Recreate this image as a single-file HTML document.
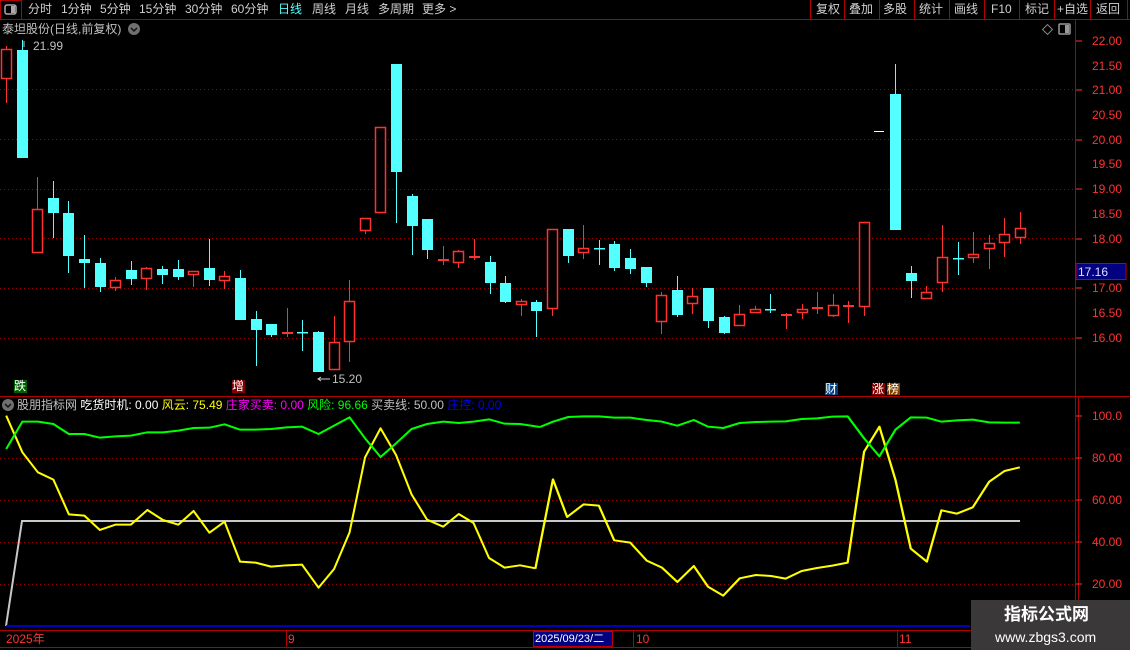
<!DOCTYPE html>
<html><head><meta charset="utf-8"><style>
body{margin:0;background:#000;width:1130px;height:650px;overflow:hidden;position:relative;font-family:"Liberation Sans","Noto Sans CJK SC",sans-serif;font-size:12px;}
.t{position:absolute;white-space:nowrap;line-height:14px;}
</style></head><body>
<svg id="s" width="1130" height="650" style="position:absolute;left:0;top:0" xmlns="http://www.w3.org/2000/svg">
<!-- toolbar -->
<line x1="0" y1="19.5" x2="1130" y2="19.5" stroke="#b00000"/>
<rect x="0.5" y="0.5" width="21" height="19" fill="none" stroke="#b00000"/>
<rect x="5" y="5" width="11" height="9" rx="2" fill="none" stroke="#aaa" stroke-width="1.5"/><rect x="11" y="6" width="4" height="7" fill="#aaa"/>
<g stroke="#b00000"><line x1="810.5" y1="0" x2="810.5" y2="19"/><line x1="844.5" y1="0" x2="844.5" y2="19"/><line x1="879.5" y1="0" x2="879.5" y2="19"/><line x1="914.5" y1="0" x2="914.5" y2="19"/><line x1="949.5" y1="0" x2="949.5" y2="19"/><line x1="984.5" y1="0" x2="984.5" y2="19"/><line x1="1019.5" y1="0" x2="1019.5" y2="19"/><line x1="1054.5" y1="0" x2="1054.5" y2="19"/><line x1="1090.5" y1="0" x2="1090.5" y2="19"/><line x1="1127.5" y1="0" x2="1127.5" y2="19"/></g>
<!-- frame -->
<line x1="1075.5" y1="20" x2="1075.5" y2="630" stroke="#b00000"/>
<line x1="1078.5" y1="396" x2="1078.5" y2="630" stroke="#b00000"/>
<line x1="0" y1="396.5" x2="1130" y2="396.5" stroke="#b00000"/>
<line x1="0" y1="630.5" x2="1130" y2="630.5" stroke="#b00000"/>
<line x1="0" y1="647.5" x2="1130" y2="647.5" stroke="#b00000"/>
<g stroke="#b00000"><line x1="286.5" y1="630" x2="286.5" y2="647"/><line x1="633.5" y1="630" x2="633.5" y2="647"/><line x1="897.5" y1="630" x2="897.5" y2="647"/></g>
<!-- grid -->
<g stroke="#a00000" stroke-dasharray="1,3"><line x1="0" y1="89.5" x2="1075" y2="89.5"/><line x1="0" y1="139.5" x2="1075" y2="139.5"/><line x1="0" y1="189.5" x2="1075" y2="189.5"/><line x1="0" y1="238.5" x2="1075" y2="238.5"/><line x1="0" y1="288.5" x2="1075" y2="288.5"/><line x1="0" y1="338.5" x2="1075" y2="338.5"/>
<line x1="0" y1="458.5" x2="1075" y2="458.5"/><line x1="0" y1="500.5" x2="1075" y2="500.5"/><line x1="0" y1="542.5" x2="1075" y2="542.5"/><line x1="0" y1="584.5" x2="1075" y2="584.5"/></g>
<!-- axis ticks -->
<g stroke="#ff3232"><line x1="1076" y1="41" x2="1082" y2="41"/><line x1="1076" y1="90" x2="1082" y2="90"/><line x1="1076" y1="140" x2="1082" y2="140"/><line x1="1076" y1="189" x2="1082" y2="189"/><line x1="1076" y1="239" x2="1082" y2="239"/><line x1="1076" y1="288" x2="1082" y2="288"/><line x1="1076" y1="338" x2="1082" y2="338"/><line x1="1076" y1="416" x2="1082" y2="416"/><line x1="1076" y1="458" x2="1082" y2="458"/><line x1="1076" y1="500" x2="1082" y2="500"/><line x1="1076" y1="542" x2="1082" y2="542"/><line x1="1076" y1="584" x2="1082" y2="584"/></g>
<g id="cd"></g>
<line x1="874" y1="131.5" x2="884" y2="131.5" stroke="#fff"/>
<!-- indicator lines -->
<polyline points="6,626 22,521 1020,521" fill="none" stroke="#c8c8c8" stroke-width="2"/>
<line x1="6" y1="626" x2="970" y2="626" stroke="#0000ff" stroke-width="1.5"/>
<g transform="translate(0,395) scale(0.3444,0.3333)" fill="none" stroke-width="6" stroke-linejoin="round">
<polyline stroke="#ffff00" points="18,62 65,172 110,232 155,254 200,358 245,362 290,405 335,389 380,389 428,345 473,375 518,389 562,348 608,413 652,380 697,500 742,503 787,515 832,511 877,509 925,578 970,522 1015,412 1060,187 1105,100 1150,180 1195,298 1240,374 1287,395 1332,357 1375,384 1420,489 1465,518 1510,511 1555,520"/>
<polyline stroke="#00ff00" points="18,162 65,80 110,80 155,87 200,117 245,117 290,128 335,124 380,122 428,112 473,112 518,107 562,99 608,98 652,88 697,104 742,104 787,102 832,97 877,95 925,117 970,92 1015,67 1060,130 1105,186 1150,145 1195,102 1240,87 1287,80 1332,84 1375,80 1420,73 1465,86 1510,87 1568,96"/>
</g>
<g transform="translate(530,395) scale(0.3827,0.3333)" fill="none" stroke-width="6" stroke-linejoin="round">
<polyline stroke="#ffff00" points="14,521 60,253 97,366 140,328 180,332 220,436 262,443 305,497 345,518 385,561 428,513 465,575 505,602 548,550 590,540 630,543 668,551 710,528 750,519 790,512 830,503 873,170 913,95 955,255 995,461 1037,500 1075,346 1115,356 1157,337 1200,260 1240,228 1280,217"/>
<polyline stroke="#00ff00" points="26,96 60,80 100,66 140,64 180,64 220,68 262,68 305,75 345,80 385,92 428,75 465,95 505,99 548,84 590,81 630,80 668,79 710,72 750,70 790,65 830,64 873,130 913,184 955,104 995,67 1037,68 1075,80 1115,76 1157,74 1200,82 1240,83 1280,83"/>
</g>
<!-- markers -->
<rect x="14" y="380" width="13" height="13" fill="#006000"/>
<rect x="232" y="380" width="13" height="13" fill="#800000"/>
<rect x="825" y="383" width="13" height="12" fill="#004080"/>
<rect x="872" y="383" width="13" height="12" fill="#800000"/>
<rect x="887" y="383" width="13" height="12" fill="#804000"/>
<!-- title icons -->
<circle cx="134" cy="29" r="6" fill="#707070"/><polyline points="131,28 134,31 137,28" fill="none" stroke="#111" stroke-width="1.5"/>
<circle cx="8" cy="405" r="6" fill="#707070"/><polyline points="5,404 8,407 11,404" fill="none" stroke="#111" stroke-width="1.5"/>
<rect x="1044" y="26" width="7" height="7" fill="none" stroke="#888" transform="rotate(45 1047.5 29.5)"/>
<rect x="1059" y="24" width="11" height="10" rx="1" fill="none" stroke="#999" stroke-width="1.5"/><rect x="1065" y="25" width="4" height="8" fill="#999"/>
<polyline points="24,41 24,47" stroke="#ccc"/><polyline points="321,377 318,379 321,381" fill="none" stroke="#ccc"/><line x1="318" y1="379" x2="330" y2="379" stroke="#ccc"/>
<!-- current price box -->
<rect x="1076" y="263.5" width="50" height="16" fill="#000080" stroke="#c00000"/>
<rect x="533.5" y="631.5" width="79" height="15" fill="#000080" stroke="#c00000"/>
<rect x="971" y="600" width="159" height="50" fill="#3a3838"/>
</svg>
<div class="t" style="left:28px;top:2px;color:#d0d0d0">分时</div>
<div class="t" style="left:61px;top:2px;color:#d0d0d0">1分钟</div>
<div class="t" style="left:100px;top:2px;color:#d0d0d0">5分钟</div>
<div class="t" style="left:139px;top:2px;color:#d0d0d0">15分钟</div>
<div class="t" style="left:185px;top:2px;color:#d0d0d0">30分钟</div>
<div class="t" style="left:231px;top:2px;color:#d0d0d0">60分钟</div>
<div class="t" style="left:278px;top:2px;color:#54ffff">日线</div>
<div class="t" style="left:312px;top:2px;color:#d0d0d0">周线</div>
<div class="t" style="left:345px;top:2px;color:#d0d0d0">月线</div>
<div class="t" style="left:378px;top:2px;color:#d0d0d0">多周期</div>
<div class="t" style="left:422px;top:2px;color:#d0d0d0">更多 &gt;</div>
<div class="t" style="left:816px;top:2px;color:#d0d0d0">复权</div>
<div class="t" style="left:849px;top:2px;color:#d0d0d0">叠加</div>
<div class="t" style="left:883px;top:2px;color:#d0d0d0">多股</div>
<div class="t" style="left:919px;top:2px;color:#d0d0d0">统计</div>
<div class="t" style="left:954px;top:2px;color:#d0d0d0">画线</div>
<div class="t" style="left:991px;top:2px;color:#d0d0d0">F10</div>
<div class="t" style="left:1025px;top:2px;color:#d0d0d0">标记</div>
<div class="t" style="left:1057px;top:2px;color:#d0d0d0">+自选</div>
<div class="t" style="left:1096px;top:2px;color:#d0d0d0">返回</div>
<div class="t" style="left:2px;top:22px;color:#c0c0c0">泰坦股份(日线,前复权)</div>
<div class="t" style="left:33px;top:39px;color:#c0c0c0">21.99</div>
<div class="t" style="left:332px;top:372px;color:#c0c0c0">15.20</div>
<div class="t" style="left:1092px;top:34px;color:#ff3232">22.00</div>
<div class="t" style="left:1092px;top:59px;color:#ff3232">21.50</div>
<div class="t" style="left:1092px;top:83px;color:#ff3232">21.00</div>
<div class="t" style="left:1092px;top:108px;color:#ff3232">20.50</div>
<div class="t" style="left:1092px;top:133px;color:#ff3232">20.00</div>
<div class="t" style="left:1092px;top:157px;color:#ff3232">19.50</div>
<div class="t" style="left:1092px;top:182px;color:#ff3232">19.00</div>
<div class="t" style="left:1092px;top:207px;color:#ff3232">18.50</div>
<div class="t" style="left:1092px;top:232px;color:#ff3232">18.00</div>
<div class="t" style="left:1092px;top:281px;color:#ff3232">17.00</div>
<div class="t" style="left:1092px;top:306px;color:#ff3232">16.50</div>
<div class="t" style="left:1092px;top:331px;color:#ff3232">16.00</div>
<div class="t" style="left:1078px;top:265px;color:#e0e0ff">17.16</div>
<div class="t" style="left:1092px;top:409px;color:#ff3232">100.0</div>
<div class="t" style="left:1092px;top:451px;color:#ff3232">80.00</div>
<div class="t" style="left:1092px;top:493px;color:#ff3232">60.00</div>
<div class="t" style="left:1092px;top:535px;color:#ff3232">40.00</div>
<div class="t" style="left:1092px;top:577px;color:#ff3232">20.00</div>
<div class="t" style="left:14px;top:379px;color:#fff">跌</div>
<div class="t" style="left:232px;top:379px;color:#fff">增</div>
<div class="t" style="left:825px;top:382px;color:#fff">财</div>
<div class="t" style="left:872px;top:382px;color:#fff">涨</div>
<div class="t" style="left:887px;top:382px;color:#fff">榜</div>
<div class="t" style="left:17px;top:398px;color:#c0c0c0">股朋指标网 <span style="color:#fff">吃货时机: 0.00</span> <span style="color:#ffff00">风云: 75.49</span> <span style="color:#ff00ff">庄家买卖: 0.00</span> <span style="color:#00ff00">风险: 96.66</span> 买卖线: 50.00 <span style="color:#0000ff">庄控: 0.00</span></div>
<div class="t" style="left:6px;top:632px;color:#ff3232">2025年</div>
<div class="t" style="left:288px;top:632px;color:#ff3232">9</div>
<div class="t" style="left:535px;top:632px;color:#fff;font-size:11px">2025/09/23/二</div>
<div class="t" style="left:636px;top:632px;color:#ff3232">10</div>
<div class="t" style="left:899px;top:632px;color:#ff3232">11</div>
<div class="t" style="left:1004px;top:605px;color:#fff;font-size:17px;font-weight:bold;line-height:20px">指标公式网</div>
<div class="t" style="left:995px;top:629px;color:#fff;font-size:14px;line-height:16px">www.zbgs3.com</div>
<script>
var D=[['r',49,79,46,103],['c',50,158,40,158],['r',209,253,177,253],['c',198,213,181,238],['c',213,256,201,273],['c',259,263,235,288],['c',263,287,258,292],['r',280,288,277,291],['c',270,279,261,285],['r',268,279,267,290],['c',269,275,266,284],['c',269,277,260,280],['r',271,275,271,287],['c',268,280,239,286],['r',276,281,271,289],['c',278,320,270,320],['c',319,330,311,366],['c',324,335,324,337],['r',332,334,308,337],['c',332,333,320,351],['c',332,372,331,372],['r',342,370,316,370],['r',301,342,280,362],['r',218,231,218,234],['r',127,213,127,213],['c',64,172,64,223],['c',196,226,194,255],['c',219,250,219,259],['r',259,261,246,265],['r',251,263,250,268],['r',256,257,239,260],['c',262,283,256,294],['c',283,302,276,303],['r',301,305,299,316],['c',302,311,300,337],['r',229,309,229,316],['c',229,256,229,263],['r',248,253,225,259],['c',248,249,240,265],['c',244,268,241,271],['c',258,269,249,274],['c',267,283,267,287],['r',295,322,292,334],['c',290,315,276,317],['r',296,304,288,314],['c',288,321,288,328],['c',317,333,316,334],['r',314,326,305,326],['r',309,313,306,313],['c',309,310,294,313],['r',314,316,313,329],['r',309,313,304,319],['r',307,309,292,314],['r',305,316,294,317],['r',305,306,301,323],['r',222,307,222,316],null,['c',94,230,64,230],['c',273,281,266,298],['r',292,299,286,299],['r',257,283,225,292],['c',258,259,242,275],['r',254,258,232,263],['r',243,249,235,269],['r',234,243,218,257],['r',228,238,212,244]];
var g=document.getElementById('cd'),h='';
D.forEach(function(d,i){if(!d)return;var cx=Math.round(6+15.6*i)+0.5,x=cx-5.5,w=11;var col=d[0]=='r'?'#ff3232':'#54ffff';
h+='<line x1="'+cx+'" y1="'+d[3]+'" x2="'+cx+'" y2="'+d[4]+'" stroke="'+col+'"/>';
var bh=Math.max(d[2]-d[1],1);
if(d[0]=='r'){if(bh<=2)h+='<rect x="'+x+'" y="'+d[1]+'" width="'+w+'" height="2" fill="'+col+'"/>';else h+='<rect x="'+(x+0.5)+'" y="'+(d[1]+0.5)+'" width="'+(w-1)+'" height="'+(bh-1)+'" fill="#000" stroke="'+col+'" stroke-width="1.5"/>';}
else h+='<rect x="'+x+'" y="'+d[1]+'" width="'+w+'" height="'+Math.max(bh,1.5)+'" fill="'+col+'"/>';});
g.innerHTML=h;
</script>
</body></html>
